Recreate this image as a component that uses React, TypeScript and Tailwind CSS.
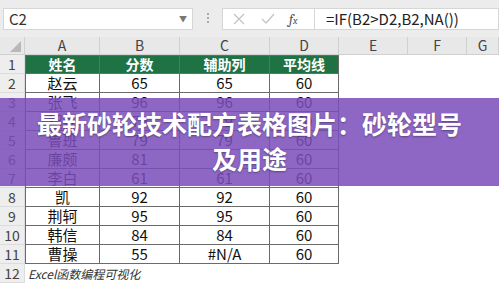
import { type ReactNode } from "react";

// ---------------------------------------------------------------------------
// Data
// ---------------------------------------------------------------------------

type Row = [string, string, string, string];

const rows: Row[] = [
  ["赵云", "65", "65", "60"],
  ["张飞", "96", "96", "60"],
  ["貂蝉", "79", "79", "60"],
  ["鲁班", "79", "79", "60"],
  ["廉颇", "81", "81", "60"],
  ["李白", "61", "61", "60"],
  ["凯", "92", "92", "60"],
  ["荆轲", "95", "95", "60"],
  ["韩信", "84", "84", "60"],
  ["曹操", "55", "#N/A", "60"],
];

const letters = ["A", "B", "C", "D", "E", "F", "G"];

const font = { fontFamily: '"Noto Sans CJK SC", "Liberation Sans", sans-serif' };

// ---------------------------------------------------------------------------
// Pieces
// ---------------------------------------------------------------------------

function FormulaBar(): ReactNode {
  return (
    <div className="flex h-[37px] items-start bg-[#ececec] pt-[8px]">
      <div className="ml-[3px] flex h-[22px] w-[190px] items-center justify-between border border-[#d6d6d6] bg-white pl-[5px] pr-[5px]">
        <span className="text-[15px] text-[#333]">C2</span>
        <span className="text-[8px] text-[#777]">▼</span>
      </div>
      <div className="flex w-[29px] flex-col items-center justify-center gap-[2px] pt-[5px]">
        <span className="h-[2px] w-[2px] bg-[#aaa]" />
        <span className="h-[2px] w-[2px] bg-[#aaa]" />
        <span className="h-[2px] w-[2px] bg-[#aaa]" />
      </div>
      <div className="flex h-[22px] w-[92px] items-center border-y border-l border-[#d6d6d6] bg-white">
        <svg width="12" height="12" viewBox="0 0 12 12" className="ml-[10px]">
          <path d="M1 1 L11 11 M11 1 L1 11" stroke="#c4c4c4" strokeWidth="1.3" />
        </svg>
        <svg width="14" height="12" viewBox="0 0 14 12" className="ml-[16px]">
          <path d="M1 6 L5 10 L13 1" stroke="#c4c4c4" strokeWidth="1.3" fill="none" />
        </svg>
        <span className="ml-[14px] font-serif text-[14px] italic text-[#555]">
          f<span className="text-[10px]">x</span>
        </span>
      </div>
      <div className="flex h-[22px] flex-1 items-center border border-[#d6d6d6] bg-white pl-[11px]">
        <span className="text-[15px] text-[#222]">=IF(B2&gt;D2,B2,NA())</span>
      </div>
    </div>
  );
}

const cellBorder = "border-r border-b border-[#6a6a6a]";
const rowHead =
  "flex items-center justify-center border-r border-b border-[#dcdcdc] bg-[#eeeeee] text-[14px] text-[#444]";

function Sheet(): ReactNode {
  return (
    <div className="grid grid-cols-[25px_75px_80px_90px_69px_69px_59px_1fr] grid-rows-[18px_repeat(12,19px)]">
      {/* Column headers */}
      <div className="relative border-r border-b border-[#d0d0d0] bg-[#e8e8e8]">
        <div className="absolute bottom-[2px] right-[3px] h-0 w-0 border-b-[11px] border-l-[11px] border-b-[#b8b8b8] border-l-transparent" />
      </div>
      {letters.map((l) => (
        <div
          key={l}
          className="flex items-center justify-center border-r border-b border-[#d0d0d0] bg-[#e8e8e8] text-[14px] text-[#444]"
        >
          {l}
        </div>
      ))}

      {/* Row 1: table header */}
      <div className={rowHead}>1</div>
      {["姓名", "分数", "辅助列", "平均线"].map((h, i) => (
        <div
          key={h}
          className={`flex items-center justify-center bg-[#1f7244] text-[14px] font-bold text-white ${cellBorder} border-t ${i === 0 ? "border-l" : ""}`}
        >
          {h}
        </div>
      ))}
      <div className="col-span-3 bg-white" />

      {/* Data rows */}
      {rows.map((r, ri) => (
        <RowCells key={ri} num={ri + 2} row={r} />
      ))}

      {/* Row 12 */}
      <div className={rowHead}>12</div>
      <div className="col-span-7 flex items-center pl-[3px] text-[12px] italic text-[#333]">Excel函数编程可视化</div>
    </div>
  );
}

function RowCells({ num, row }: { num: number; row: Row }): ReactNode {
  return (
    <>
      <div className={rowHead}>{num}</div>
      {row.map((v, i) => (
        <div
          key={i}
          className={`flex items-center justify-center bg-white text-[15px] text-[#111] ${cellBorder} ${i === 0 ? "border-l" : ""}`}
        >
          {v}
        </div>
      ))}
      <div className="col-span-3 bg-white" />
    </>
  );
}

// ---------------------------------------------------------------------------
// App
// ---------------------------------------------------------------------------

export default function App(): ReactNode {
  return (
    <div className="relative h-[284px] w-[499px] overflow-hidden bg-white" style={font}>
      <FormulaBar />
      <Sheet />

      {/* Title banner over the sheet */}
      <div className="absolute left-0 right-0 top-[98px] flex h-[88px] items-center justify-center bg-[rgba(122,76,186,0.85)] px-[20px]">
        <h1 className="-mt-[2px] text-center text-[25px] font-bold leading-[35px] text-white [text-shadow:0_1px_2px_rgba(0,0,0,0.35)]">
          最新砂轮技术配方表格图片：砂轮型号
          <br />
          及用途
        </h1>
      </div>
    </div>
  );
}
